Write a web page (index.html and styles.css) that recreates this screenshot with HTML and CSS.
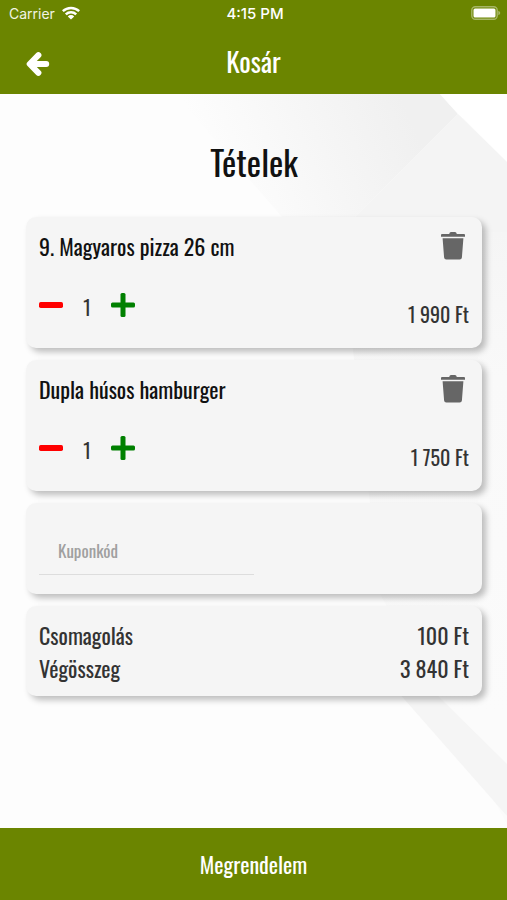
FILE: index.html
```html
<!DOCTYPE html>
<html lang="hu">
<head>
<meta charset="utf-8">
<meta name="viewport" content="width=device-width, initial-scale=1">
<title>Kosár</title>
<link rel="stylesheet" href="styles.css">
</head>
<body>
<header class="header">
  <div class="status">
    <div class="carrier">
      <span>Carrier</span>
      <svg class="wifi" viewBox="0 0 18 14" aria-hidden="true"><g fill="none" stroke="currentColor" stroke-width="2.500"><path d="M.8 5.200a11.800 11.800 0 0 1 16.400 0"/><path d="M3.800 8.400a7.500 7.500 0 0 1 10.400 0"/></g><path fill="currentColor" d="M5.800 10.400a4.600 4.600 0 0 1 6.400 0L9 13.600z"/></svg>
    </div>
    <span class="time">4:15 PM</span>
    <svg class="battery" viewBox="0 0 30 14" aria-hidden="true"><rect x=".8" y=".8" width="25.400" height="12.400" rx="3.500" fill="none" stroke="#fff" stroke-opacity=".4" stroke-width="1.400"/><rect x="2.500" y="2.500" width="22" height="9" rx="1.500" fill="#fff"/><path d="M27.300 4.800v4.400q2-.7 2-2.200t-2-2.200z" fill="#fff" fill-opacity=".4"/></svg>
  </div>
  <div class="nav">
    <button class="icon-button back" type="button" aria-label="Vissza">
      <svg viewBox="0 0 24 24" aria-hidden="true"><path d="M12.400 3.200 3.700 12l8.700 8.800M5 12h15.200" fill="none" stroke="currentColor" stroke-width="6" stroke-linecap="round" stroke-linejoin="round"/></svg>
    </button>
    <h1 class="title">Kosár</h1>
  </div>
</header>
<main class="content">
  <svg class="backdrop" viewBox="0 0 507 734" preserveAspectRatio="none" aria-hidden="true">
    <defs>
      <linearGradient id="fade" gradientUnits="userSpaceOnUse" x1="215" y1="80" x2="400" y2="0"><stop offset="0" stop-color="#f0f0f0" stop-opacity="0"/><stop offset="1" stop-color="#f0f0f0"/></linearGradient>
      <linearGradient id="side" gradientUnits="userSpaceOnUse" x1="0" y1="138" x2="0" y2="620"><stop offset="0" stop-color="#f5f5f5"/><stop offset=".3" stop-color="#f9f9f9"/><stop offset="1" stop-color="#fbfbfb"/></linearGradient>
    </defs>
    <path d="M175 0h265l18 20-118 118h-45z" fill="url(#fade)"/>
    <path d="M458 20 440 0h67v68z" fill="#fff"/>
    <path d="M458 20 507 68v80H340v-10z" fill="#f4f4f4"/>
    <path d="M340 138h167v592L380 500z" fill="url(#side)"/>
    <path d="M398 598h36l73 72v52z" fill="#f5f5f5"/>
  </svg>
  <h2 class="heading">Tételek</h2>
  <section class="card item">
    <div class="row">
      <h3 class="name">9. Magyaros pizza 26 cm</h3>
      <button class="icon-button trash" type="button" aria-label="Törlés"><svg viewBox="0 0 24 28" aria-hidden="true"><path fill="currentColor" d="M1 1.900h7.200Q8.600 0 10 0h4q1.400 0 1.800 1.900H23q1 0 1 1v1.900H0V2.900q0-1 1-1zM1.600 6.300h20.800l-1.500 19.200q-.2 2-2.200 2H5.300q-2 0-2.200-2z"/></svg></button>
    </div>
    <div class="row">
      <div class="stepper">
        <button class="icon-button minus" type="button" aria-label="Kevesebb"><svg viewBox="0 0 24 24" aria-hidden="true"><rect y="9" width="24" height="6" rx="1.700" fill="currentColor"/></svg></button>
        <span class="count">1</span>
        <button class="icon-button plus" type="button" aria-label="Több"><svg viewBox="0 0 24 24" aria-hidden="true"><g fill="currentColor"><rect y="9.500" width="24" height="5" rx="1.500"/><rect x="9.500" width="5" height="24" rx="1.500"/></g></svg></button>
      </div>
      <span class="price">1 990 Ft</span>
    </div>
  </section>
  <section class="card item">
    <div class="row">
      <h3 class="name">Dupla húsos hamburger</h3>
      <button class="icon-button trash" type="button" aria-label="Törlés"><svg viewBox="0 0 24 28" aria-hidden="true"><path fill="currentColor" d="M1 1.900h7.200Q8.600 0 10 0h4q1.400 0 1.800 1.900H23q1 0 1 1v1.900H0V2.900q0-1 1-1zM1.600 6.300h20.800l-1.500 19.200q-.2 2-2.200 2H5.300q-2 0-2.200-2z"/></svg></button>
    </div>
    <div class="row">
      <div class="stepper">
        <button class="icon-button minus" type="button" aria-label="Kevesebb"><svg viewBox="0 0 24 24" aria-hidden="true"><rect y="9" width="24" height="6" rx="1.700" fill="currentColor"/></svg></button>
        <span class="count">1</span>
        <button class="icon-button plus" type="button" aria-label="Több"><svg viewBox="0 0 24 24" aria-hidden="true"><g fill="currentColor"><rect y="9.500" width="24" height="5" rx="1.500"/><rect x="9.500" width="5" height="24" rx="1.500"/></g></svg></button>
      </div>
      <span class="price">1 750 Ft</span>
    </div>
  </section>
  <section class="card coupon">
    <input class="coupon-input" type="text" placeholder="Kuponkód" aria-label="Kuponkód">
  </section>
  <dl class="card totals">
    <div class="total"><dt>Csomagolás</dt><dd>100 Ft</dd></div>
    <div class="total"><dt>Végösszeg</dt><dd>3 840 Ft</dd></div>
  </dl>
</main>
<button class="order" type="button">Megrendelem</button>
</body>
</html>
```
FILE: styles.css
```css
* {
  box-sizing: border-box;
}

body {
  margin: 0;
  min-height: 100vh;
  display: flex;
  flex-direction: column;
  background: #fdfdfd;
  color: #333;
  font-family: Oswald, "Liberation Sans Narrow", "Arial Narrow", "Liberation Sans", sans-serif;
}

h1, h2, h3, dl, dd {
  margin: 0;
  font-weight: 400;
}

button, input {
  font: inherit;
  border: 0;
  padding: 0;
  background: none;
}

svg {
  display: block;
}

.header {
  height: 94px;
  background: #6b8500;
  color: #fff;
}

.status {
  display: grid;
  grid-template-columns: 1fr auto 1fr;
  align-items: center;
  height: 26px;
  padding: 0 6px 0 9px;
  font-family: Inter, "Liberation Sans", sans-serif;
  font-size: 14px;
}

.carrier {
  display: flex;
  align-items: center;
  gap: 7px;
  color: #f1f4e4;
}

.wifi {
  width: 18px;
  height: 14px;
  color: #fff;
}

.time {
  font-size: 15px;
  font-weight: 500;
}

.battery {
  width: 30px;
  height: 14px;
  justify-self: end;
}

.nav {
  display: grid;
  grid-template-columns: 24px 1fr 24px;
  align-items: center;
  height: 72px;
  padding: 0 26px;
}

.title {
  font-size: 27px;
  line-height: 36px;
  padding-bottom: 2px;
  text-align: center;
}

.icon-button {
  color: inherit;
  cursor: pointer;
}

.icon-button svg {
  width: 24px;
  height: 24px;
}

.back {
  padding-top: 4px;
}

.content {
  position: relative;
  flex: 1;
  display: flex;
  flex-direction: column;
  gap: 12px;
  padding: 44px 25px 48px 26px;
}

.backdrop {
  position: absolute;
  inset: 0;
  width: 100%;
  height: 100%;
  z-index: -1;
}

.heading {
  margin-bottom: 19px;
  color: #111;
  font-size: 34px;
  line-height: 48px;
  text-align: center;
}

.card {
  padding: 12px 13px;
  border-radius: 10px;
  background: #f5f5f5;
  box-shadow: 4px 4px 6px rgba(0, 0, 0, 0.25);
}

.item {
  display: flex;
  flex-direction: column;
  justify-content: space-between;
  min-height: 131px;
  padding-top: 11px;
  padding-bottom: 16px;
}

.row {
  display: flex;
  align-items: center;
  justify-content: space-between;
}

.name {
  color: #111;
  font-size: 22px;
  line-height: 36px;
}

.trash {
  padding: 0 4px;
  color: #666;
}

.trash svg {
  height: 28px;
}

.stepper {
  display: flex;
  align-items: center;
  height: 36px;
  padding-bottom: 18px;
}

.minus {
  color: #f00;
}

.plus {
  color: #008000;
}

.count {
  width: 48px;
  padding-top: 4px;
  font-size: 20px;
  text-align: center;
}

.price {
  font-size: 20px;
  line-height: 36px;
}

.coupon {
  height: 91px;
  padding-top: 24px;
}

.coupon-input {
  width: 50%;
  height: 48px;
  padding: 0 19px;
  border-bottom: 1px solid #ddd;
  color: #333;
  font-size: 17px;
}

.coupon-input::placeholder {
  color: #a0a0a0;
  opacity: 1;
}

.totals {
  padding-top: 13px;
  padding-bottom: 11px;
  font-size: 22px;
  line-height: 33px;
}

.total {
  display: flex;
  justify-content: space-between;
}

.order {
  height: 72px;
  background: #6b8500;
  color: #fff;
  font-size: 22px;
  cursor: pointer;
}
```
